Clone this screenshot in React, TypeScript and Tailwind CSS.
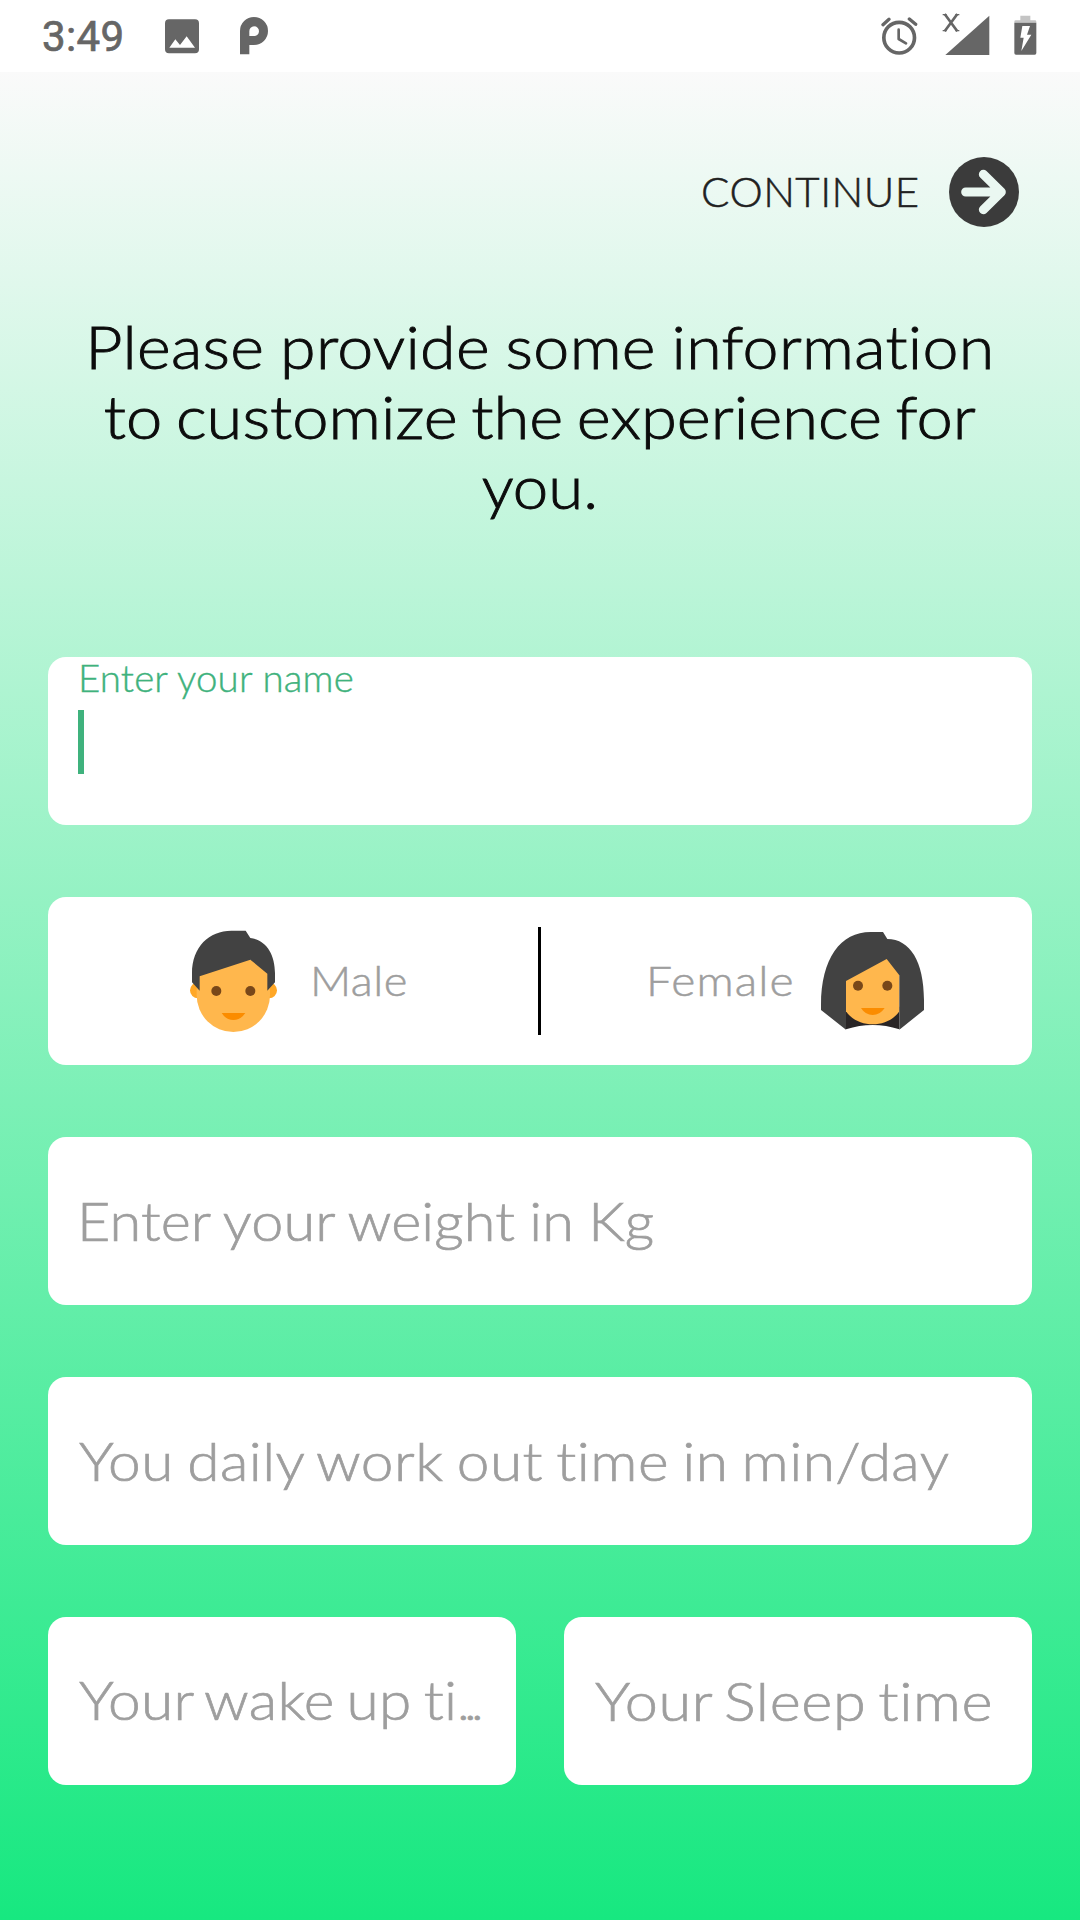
import type { ReactNode } from "react";

const light = "font-['Lato','Open_Sans',sans-serif] font-light [font-variant-ligatures:none]";

function StatusBar() {
  return (
    <header className="flex h-[72px] items-center bg-white text-[#666666]">
      <span className="ml-[42px] w-[123px] pt-[2px] font-['Roboto',sans-serif] text-[42px] leading-none font-[450] tracking-[0.4px] whitespace-nowrap [-webkit-text-stroke:0.7px_#666666]">
        3:49
      </span>
      <svg className="w-[34px] h-[35px]" viewBox="495 56 102 105" fill="currentColor" fillRule="evenodd">
        <path d="M507 57H585Q597 57 597 69V147Q597 159 585 159H507Q495 159 495 147V69Q495 57 507 57ZM508 142H585L560 108L540 134L526 117Z" />
      </svg>
      <svg className="ml-[41px] w-[28px] h-[38px]" viewBox="720 53 84 114" fill="currentColor" fillRule="evenodd">
        <path d="M720 165V95A42 42 0 1 1 762 137H748V165ZM748 110V96A14.500 14.500 0 1 1 762 110Z" />
      </svg>
      <svg className="ml-auto w-[37px] h-[40px]" viewBox="124 48 111 120" fill="none" stroke="currentColor" strokeLinecap="round">
        <circle cx="178.500" cy="113" r="46" strokeWidth="11" />
        <path d="M177 89V117L199 130" strokeWidth="8" strokeLinejoin="round" />
        <path d="M130 74L148 58M228 73L209 57" strokeWidth="10" />
      </svg>
      <svg className="mb-1 ml-[24px] w-[48px] h-[44px]" viewBox="305 36 144 132">
        <path d="M447 47V165H315Z" fill="currentColor" />
        <path d="M313 42L351 94M351 42L313 94" stroke="currentColor" strokeWidth="8" fill="none" />
        <path d="M307 44H319M345 44H357M307 92H319M345 92H357" stroke="currentColor" strokeWidth="4" />
      </svg>
      <svg className="mb-[2px] ml-[24px] mr-[43px] w-[23px] h-[40px]" viewBox="521 46 69 120">
        <path d="M522 69V66Q522 62 526 62H540V48H570V62H584Q588 62 588 66V69Z" fill="#c4c4c4" />
        <path d="M522 69H588V160Q588 165 583 165H527Q522 165 522 160Z" fill="currentColor" />
        <path d="M546 79H569L560 105H573L543 154L550 114H540Z" fill="#ffffff" />
      </svg>
    </header>
  );
}

function ArrowCircle() {
  return (
    <svg className="w-[70px] h-[70px]" viewBox="807 51 210 210">
      <circle cx="912" cy="156" r="105" fill="#3b3b3b" />
      <path d="M857 156H964M910 103L964 156L910 209" fill="none" stroke="#eaf7f1" strokeWidth="27" strokeLinecap="round" strokeLinejoin="round" />
    </svg>
  );
}

function MaleFace() {
  return (
    <svg className="w-[88px] h-[102px] shrink-0" viewBox="60 60 264 306">
      <circle cx="84" cy="241" r="24" fill="#ffa726" />
      <circle cx="297" cy="241" r="24" fill="#ffa726" />
      <path d="M80 150H300V256A110 110 0 0 1 80 256Z" fill="#ffb74d" />
      <path d="M184 62H227L241 84C288 90 315 132 315 190V217L292 242V191L241 149L89 199V242L66 217V190C66 110 118 62 184 62Z" fill="#424242" />
      <circle cx="139" cy="243" r="15" fill="#784719" />
      <circle cx="241" cy="243" r="15" fill="#784719" />
      <path d="M155 309H226Q212 330 190 330T155 309Z" fill="#fb8c00" />
    </svg>
  );
}

function FemaleFace() {
  return (
    <svg className="w-[105px] h-[102px] shrink-0" viewBox="600 60 315 306">
      <path d="M678 290H838V358Q758 332 678 358Z" fill="#292526" />
      <path d="M678 140H838V304C802 356 714 356 678 304Z" fill="#ffb74d" />
      <path d="M752 66H789L802 87C870 87 912 155 912 270V300L838 359V196L800 147L678 213V359L603 300V285C603 145 662 66 752 66Z" fill="#424242" />
      <circle cx="714" cy="227" r="15" fill="#784719" />
      <circle cx="802" cy="227" r="15" fill="#784719" />
      <path d="M723 294H794Q780 315 758 315T723 294Z" fill="#fb8c00" />
    </svg>
  );
}

function Card({ children, className = "" }: { children: ReactNode; className?: string }) {
  return <div className={`flex h-[168px] min-w-0 items-center rounded-[18px] bg-white ${className}`}>{children}</div>;
}

function Placeholder({ children, className }: { children: ReactNode; className: string }) {
  return (
    <span className={`origin-left text-[54px] leading-[66px] whitespace-nowrap text-[#9e9e9e] [-webkit-text-stroke:0.7px_#9e9e9e] ${className}`}>
      {children}
    </span>
  );
}

export default function App() {
  return (
    <div className={`flex h-[1920px] w-[1080px] flex-col overflow-hidden bg-white ${light}`}>
      <StatusBar />
      <main className="flex flex-1 flex-col bg-[linear-gradient(to_bottom,#fafafa,#17e880)] px-12">
        <button className="mt-[85px] mr-[13px] flex h-[70px] items-center self-end text-[#212121]">
          <span className="w-[248px] pb-[2px] text-left text-[42px] leading-[50px] tracking-[0.5px] [-webkit-text-stroke:0.5px_#212121]">
            CONTINUE
          </span>
          <ArrowCircle />
        </button>

        <h1 className="mt-[84px] flex flex-col items-center text-[60px] leading-[70px] font-light whitespace-nowrap text-[#0c0c0c] [-webkit-text-stroke:0.9px_#0c0c0c]">
          <span className="scale-x-[1.075] tracking-[0.3px] [word-spacing:-2px]">Please provide some information</span>
          <span className="scale-x-[1.085] [word-spacing:-3.8px]">to customize the experience for</span>
          <span className="scale-x-[1.06]">you.</span>
        </h1>

        <form className="mt-[136px] flex flex-col gap-[72px]">
          <Card className="flex-col !items-start pl-[30px]">
            <label className="h-[43px] origin-left scale-x-[1.04] pt-px text-[37px] leading-[40px] tracking-[0.15px] whitespace-nowrap text-[#3fb27d] [-webkit-text-stroke:0.4px_#3fb27d]">
              Enter your name
            </label>
            <span className="mt-[10px] h-[64px] w-[6px] bg-[#3fb27d]" />
          </Card>

          <Card className="text-[42px] leading-[50px] text-[#9e9e9e] [-webkit-text-stroke:0.5px_#9e9e9e]">
            <div className="flex w-[490px] items-center gap-8 pl-[142px]">
              <MaleFace />
              <span className="origin-left scale-x-[1.08] pb-[2px] tracking-[0.4px]">Male</span>
            </div>
            <span className="h-[108px] w-[3px] bg-black" />
            <div className="flex items-center pl-[105px]">
              <span className="w-[174px] origin-left scale-x-[1.1] pb-[2px] tracking-[1px]">Female</span>
              <FemaleFace />
            </div>
          </Card>

          <Card className="pl-[29px]">
            <Placeholder className="scale-x-[1.065] tracking-[0.15px] [word-spacing:-1.5px]">Enter your weight in Kg</Placeholder>
          </Card>

          <Card className="pl-[31px]">
            <Placeholder className="scale-x-[1.085] tracking-[0.4px] [word-spacing:-2.8px]">You daily work out time in min/day</Placeholder>
          </Card>

          <div className="grid grid-cols-2 gap-12">
            <Card className="pl-[31px]">
              <Placeholder className="scale-x-[1.085] pt-px tracking-[0.3px] [word-spacing:-4px]">
                Your wake up ti<span className="text-[46px] tracking-[-4.2px]">...</span>
              </Placeholder>
            </Card>
            <Card className="pl-[31px]">
              <Placeholder className="scale-x-[1.1] tracking-[0.6px] [word-spacing:-4.5px]">Your Sleep time</Placeholder>
            </Card>
          </div>
        </form>
      </main>
    </div>
  );
}
